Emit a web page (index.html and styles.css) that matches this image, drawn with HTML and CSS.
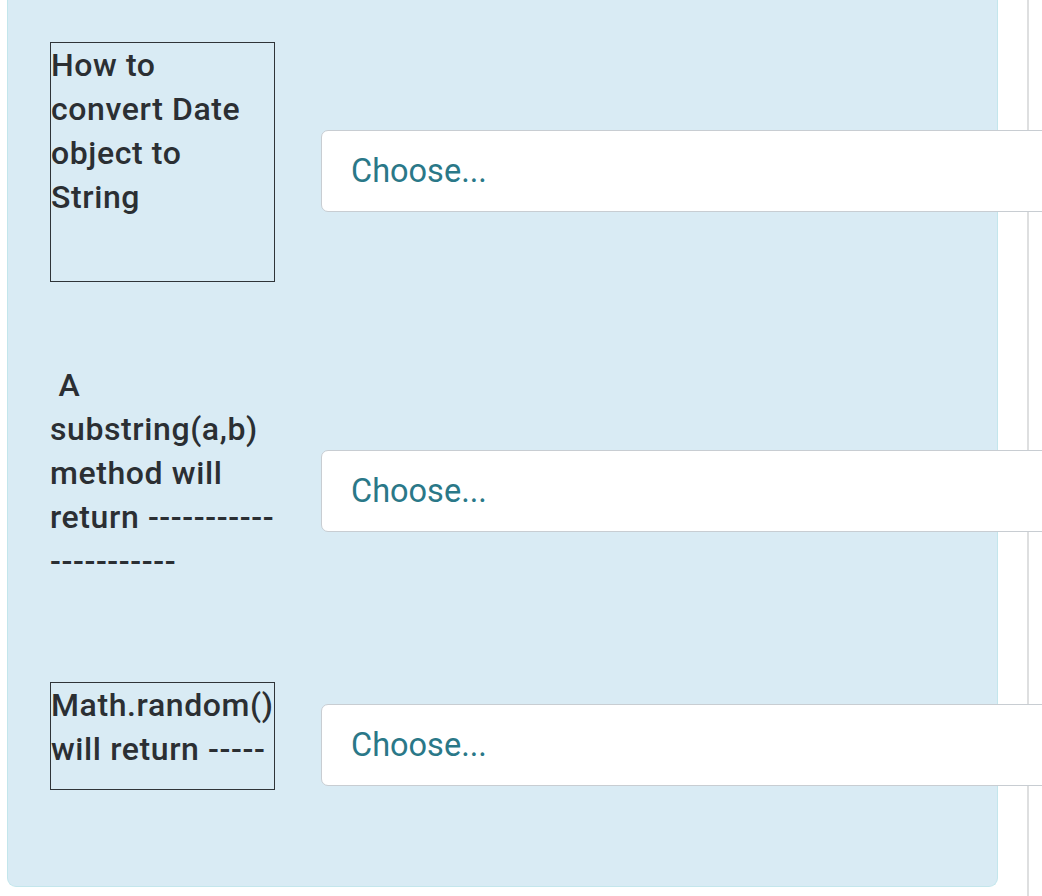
FILE: index.html
```html
<!DOCTYPE html>
<html lang="en">
<head>
<meta charset="utf-8">
<title>Matching question</title>
<link rel="stylesheet" href="styles.css">
</head>
<body>
<div class="page">
  <main class="content">
    <div class="formulation">
      <div class="match-row">
        <div class="prompt boxed tall">How to convert Date object to String</div>
        <select class="answer" aria-label="Answer 1"><option>Choose...</option></select>
      </div>
      <div class="match-row">
        <div class="prompt plain">&nbsp;A substring(a,b) method will return ----------------------</div>
        <select class="answer" aria-label="Answer 2"><option>Choose...</option></select>
      </div>
      <div class="match-row">
        <div class="prompt boxed short">Math.random() will return -----</div>
        <select class="answer" aria-label="Answer 3"><option>Choose...</option></select>
      </div>
    </div>
  </main>
  <aside class="drawer"></aside>
</div>
</body>
</html>
```
FILE: styles.css
```css
html, body {
  margin: 0;
  padding: 0;
  overflow: hidden;
  background: #ffffff;
}
body {
  font-family: Roboto, "Liberation Sans", sans-serif;
  color: #2b2f33;
}
.page {
  display: flex;
  min-height: 896px;
}
.content {
  width: 1027px;
  flex: none;
  padding-left: 7px;
  box-sizing: border-box;
}
.drawer {
  flex: 1;
  border-left: 2px solid #dedfe0;
}
.formulation {
  width: 991px;
  box-sizing: border-box;
  background: #d9ebf4;
  border: 1px solid #c3e6ec;
  border-top: 0;
  border-radius: 0 0 9px 9px;
  padding: 42px 0 96px 42px;
  display: flex;
  flex-direction: column;
  gap: 80.5px;
}
.match-row {
  display: flex;
  align-items: center;
  gap: 46px;
}
.prompt {
  width: 225px;
  flex: none;
  box-sizing: border-box;
  font-size: 32px;
  font-weight: 500;
  line-height: 44px;
  letter-spacing: 0.6px;
}
.boxed {
  border: 1px solid #2f3438;
}
.tall {
  height: 240px;
}
.short {
  padding-bottom: 18px;
}
.plain {
  padding-bottom: 19px;
}
.answer {
  position: relative;
  z-index: 2;
  appearance: none;
  -webkit-appearance: none;
  width: 820px;
  height: 82px;
  margin-top: 17px;
  flex: none;
  box-sizing: border-box;
  background: #ffffff;
  border: 1.5px solid #c8cdd2;
  border-radius: 7px;
  padding: 0 0 0 29px;
  font-family: Roboto, "Liberation Sans", sans-serif;
  font-size: 32.5px;
  color: #2a7888;
}
```
